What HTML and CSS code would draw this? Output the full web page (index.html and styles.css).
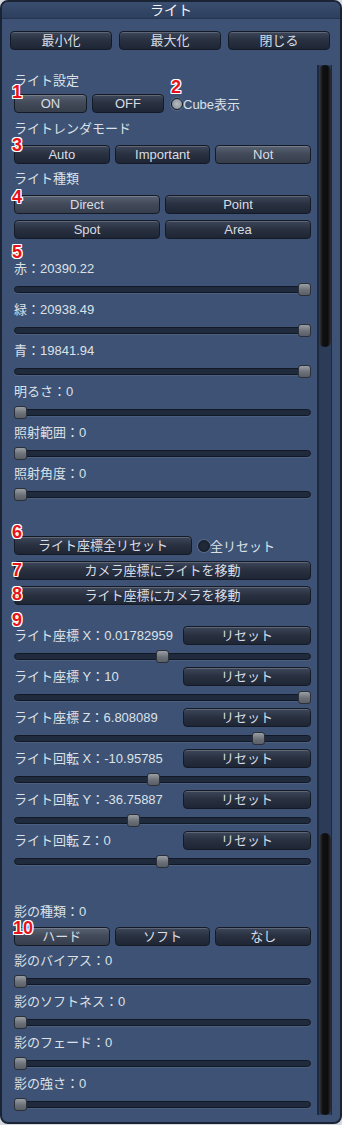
FILE: index.html
```html
<!DOCTYPE html>
<html lang="ja">
<head>
    <meta charset="UTF-8">
    <meta name="viewport" content="width=device-width, initial-scale=1.0">
    <title>ライト</title>
    <link rel="stylesheet" href="styles.css">
</head>
<body>
    <div class="window">
        <div class="titlebar">ライト</div>
        <div class="win-buttons">
            <button class="btn">最小化</button>
            <button class="btn">最大化</button>
            <button class="btn">閉じる</button>
        </div>

        <div class="panel">
            <div class="main">
                <div class="label">ライト設定</div>
                <div class="btn-row onoff">
                    <button class="btn on">ON</button>
                    <button class="btn">OFF</button>
                    <span class="radio checked"></span><span class="radio-text">Cube表示</span>
                </div>

                <div class="label gap-title">ライトレンダモード</div>
                <div class="btn-row gap-row">
                    <button class="btn">Auto</button>
                    <button class="btn">Important</button>
                    <button class="btn on">Not</button>
                </div>

                <div class="label gap-title2">ライト種類</div>
                <div class="btn-row gap-row">
                    <button class="btn on">Direct</button>
                    <button class="btn">Point</button>
                </div>
                <div class="btn-row gap-row">
                    <button class="btn">Spot</button>
                    <button class="btn">Area</button>
                </div>

                <div class="sliders color-sliders">
                    <div class="label">赤：20390.22</div>
                    <div class="slider"><div class="track"></div><div class="thumb" style="--v:1"></div></div>
                    <div class="label">緑：20938.49</div>
                    <div class="slider"><div class="track"></div><div class="thumb" style="--v:1"></div></div>
                    <div class="label">青：19841.94</div>
                    <div class="slider"><div class="track"></div><div class="thumb" style="--v:1"></div></div>
                    <div class="label">明るさ：0</div>
                    <div class="slider"><div class="track"></div><div class="thumb" style="--v:0"></div></div>
                    <div class="label">照射範囲：0</div>
                    <div class="slider"><div class="track"></div><div class="thumb" style="--v:0"></div></div>
                    <div class="label">照射角度：0</div>
                    <div class="slider"><div class="track"></div><div class="thumb" style="--v:0"></div></div>
                </div>

                <div class="btn-row reset-all">
                    <button class="btn">ライト座標全リセット</button>
                    <span class="radio"></span><span class="radio-text">全リセット</span>
                </div>
                <button class="btn wide">カメラ座標にライトを移動</button>
                <button class="btn wide">ライト座標にカメラを移動</button>

                <div class="coords">
                    <div class="coord-head"><span>ライト座標 X：0.01782959</span><button class="btn">リセット</button></div>
                    <div class="slider"><div class="track"></div><div class="thumb" style="--v:0.499"></div></div>
                    <div class="coord-head"><span>ライト座標 Y：10</span><button class="btn">リセット</button></div>
                    <div class="slider"><div class="track"></div><div class="thumb" style="--v:1"></div></div>
                    <div class="coord-head"><span>ライト座標 Z：6.808089</span><button class="btn">リセット</button></div>
                    <div class="slider"><div class="track"></div><div class="thumb" style="--v:0.839"></div></div>
                    <div class="coord-head"><span>ライト回転 X：-10.95785</span><button class="btn">リセット</button></div>
                    <div class="slider"><div class="track"></div><div class="thumb" style="--v:0.468"></div></div>
                    <div class="coord-head"><span>ライト回転 Y：-36.75887</span><button class="btn">リセット</button></div>
                    <div class="slider"><div class="track"></div><div class="thumb" style="--v:0.398"></div></div>
                    <div class="coord-head"><span>ライト回転 Z：0</span><button class="btn">リセット</button></div>
                    <div class="slider"><div class="track"></div><div class="thumb" style="--v:0.499"></div></div>
                </div>

                <div class="label shadow-title">影の種類：0</div>
                <div class="btn-row shadow-row">
                    <button class="btn on">ハード</button>
                    <button class="btn">ソフト</button>
                    <button class="btn">なし</button>
                </div>

                <div class="sliders shadow-sliders">
                    <div class="label">影のバイアス：0</div>
                    <div class="slider"><div class="track"></div><div class="thumb" style="--v:0"></div></div>
                    <div class="label">影のソフトネス：0</div>
                    <div class="slider"><div class="track"></div><div class="thumb" style="--v:0"></div></div>
                    <div class="label">影のフェード：0</div>
                    <div class="slider"><div class="track"></div><div class="thumb" style="--v:0"></div></div>
                    <div class="label">影の強さ：0</div>
                    <div class="slider"><div class="track"></div><div class="thumb" style="--v:0"></div></div>
                </div>
            </div>

            <div class="scrollbar">
                <div class="scroll-thumb"></div>
                <div class="scroll-thumb"></div>
            </div>
        </div>

        <!-- annotation numbers -->
        <span class="badge b1">1</span>
        <span class="badge b2">2</span>
        <span class="badge b3">3</span>
        <span class="badge b4">4</span>
        <span class="badge b5">5</span>
        <span class="badge b6">6</span>
        <span class="badge b7">7</span>
        <span class="badge b8">8</span>
        <span class="badge b9">9</span>
        <span class="badge b10">10</span>
    </div>
</body>
</html>
```

FILE: styles.css
```css
body {
    margin: 0;
    background-color: #d5dae0;
    font-family: "Liberation Sans", "Noto Sans CJK JP", sans-serif;
    font-size: 13px;
    color: #dce1e8;
}
.window {
    position: relative;
    width: 342px;
    height: 1124px;
    box-sizing: border-box;
    border: 2px solid #1b2434;
    border-radius: 8px;
    background-color: #3d5274;
    overflow: hidden;
}
.titlebar {
    height: 16px;
    line-height: 16px;
    text-align: center;
    font-size: 14px;
    color: #f2f4f7;
    background: linear-gradient(#3a4e70, #2d3f5d);
    border-bottom: 1px solid #26354f;
}
.win-buttons {
    display: flex;
    gap: 7px;
    margin-top: 12px;
    padding: 0 10px 0 8px;
}
.win-buttons .btn {
    flex: 1;
}
.btn {
    height: 19px;
    margin: 0;
    padding: 0;
    box-sizing: border-box;
    border: 1px solid #141b27;
    border-radius: 4px;
    background: linear-gradient(#3d475a, #2a3242 45%, #1e2534);
    box-shadow: inset 0 1px 0 rgba(255, 255, 255, 0.18);
    color: #d8dde5;
    font-family: inherit;
    font-size: 13px;
    line-height: 17px;
    text-align: center;
}
.btn.on {
    background: linear-gradient(#596374, #434b5a 45%, #363d4b);
}
.panel {
    display: flex;
    margin-top: 15px;
    padding-left: 12px;
}
.main {
    width: 297px;
    padding-top: 6px;
    display: flex;
    flex-direction: column;
}
.label {
    height: 20px;
    line-height: 20px;
    white-space: nowrap;
}
.btn-row {
    display: flex;
    gap: 5px;
    height: 19px;
}
.btn-row .btn {
    flex: 1;
}
.onoff {
    margin-top: 3px;
    align-items: center;
}
.onoff .btn:first-child {
    flex: 0 0 73px;
}
.onoff .btn:nth-child(2) {
    flex: 0 0 72px;
}
.radio {
    width: 12px;
    height: 12px;
    box-sizing: border-box;
    margin-left: 2px;
    border-radius: 50%;
    border: 1px solid #151c28;
    background: radial-gradient(#222b3b, #1a2230);
    box-shadow: 0 0 0 1px rgba(140, 150, 165, 0.35);
}
.radio.checked {
    background: radial-gradient(#b7bcc3, #838990);
}
.radio-text {
    margin-left: -5px;
    font-size: 13px;
}
.gap-title {
    margin-top: 6px;
}
.gap-title2 {
    margin-top: 5px;
}
.gap-row {
    margin-top: 6px;
}
.sliders {
    display: flex;
    flex-direction: column;
}
.color-sliders {
    margin-top: 20px;
}
.slider {
    position: relative;
    height: 21px;
}
.track {
    margin-top: 7px;
    height: 7px;
    box-sizing: border-box;
    border: 1px solid #111926;
    border-radius: 4px;
    background-color: #1f2a3d;
    box-shadow: 0 1px 0 rgba(255, 255, 255, 0.08);
}
.thumb {
    position: absolute;
    top: 4px;
    left: calc(var(--v) * (100% - 13px));
    width: 13px;
    height: 13px;
    box-sizing: border-box;
    border: 1px solid #2a2f38;
    border-radius: 3px;
    background: linear-gradient(#9a9ea5, #6c7179 55%, #5a5f67);
}
.reset-all {
    margin-top: 31px;
    align-items: center;
}
.reset-all .btn {
    flex: 0 0 178px;
}
.reset-all .radio {
    margin-left: 1px;
}
.wide {
    margin-top: 6px;
    width: 100%;
}
.coords {
    margin-top: 21px;
    display: flex;
    flex-direction: column;
}
.coord-head {
    display: flex;
    justify-content: space-between;
    align-items: flex-start;
    height: 20px;
    line-height: 20px;
    white-space: nowrap;
}
.coord-head .btn {
    width: 128px;
}
.shadow-title {
    margin-top: 30px;
}
.shadow-row {
    margin-top: 5px;
}
.shadow-sliders {
    margin-top: 5px;
}
.scrollbar {
    width: 15px;
    margin-left: 6px;
    box-sizing: border-box;
    border-left: 2px solid #1d2940;
    border-right: 1px solid #1d2940;
    background-color: #2c3c58;
    display: flex;
    flex-direction: column;
    justify-content: space-between;
}
.scroll-thumb {
    height: 282px;
    border-radius: 6px;
    background: linear-gradient(90deg, #3b3d42, #101112 30%, #0c0c0d 70%, #2b2d31);
}
.badge {
    position: absolute;
    font-size: 18px;
    font-weight: bold;
    line-height: 18px;
    color: #e8121b;
    text-shadow: -1px -1px 0 #fff, 1px -1px 0 #fff, -1px 1px 0 #fff, 1px 1px 0 #fff,
        0 -1px 0 #fff, 0 1px 0 #fff, -1px 0 0 #fff, 1px 0 0 #fff;
}
.b1 { left: 10px; top: 81px; }
.b2 { left: 169px; top: 76px; }
.b3 { left: 10px; top: 134px; }
.b4 { left: 10px; top: 186px; }
.b5 { left: 10px; top: 241px; }
.b6 { left: 10px; top: 521px; }
.b7 { left: 10px; top: 559px; }
.b8 { left: 10px; top: 583px; }
.b9 { left: 10px; top: 609px; }
.b10 { left: 11px; top: 917px; }
```
